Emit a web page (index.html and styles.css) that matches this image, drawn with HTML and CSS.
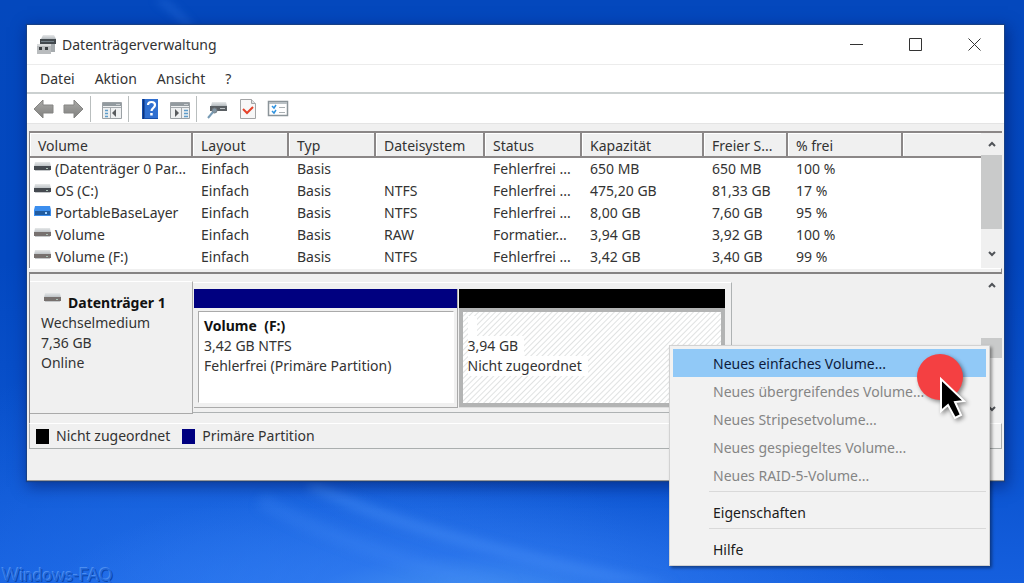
FILE: index.html
```html
<!DOCTYPE html>
<html lang="de">
<head>
<meta charset="utf-8">
<title>Datenträgerverwaltung</title>
<link rel="stylesheet" href="styles.css">
</head>
<body>
<svg class="defs" aria-hidden="true">
  <defs>
    <linearGradient id="top" x1="0" y1="0" x2="0" y2="1"><stop offset="0" stop-color="#e6e8e9"/><stop offset="1" stop-color="#b4babe"/></linearGradient>
    <linearGradient id="arrow" x1="0" y1="0" x2="0" y2="1"><stop offset="0" stop-color="#a9a9a7"/><stop offset="1" stop-color="#80807e"/></linearGradient>
    <symbol id="drive" viewBox="0 0 17 11"><path d="M1 0h15l1 5H0z" fill="url(#top)"/><path d="M0 4h17v4H0z" fill="currentColor"/><path d="M1 8h15v1H1z" fill="#c5c8ca"/><path d="M12 6h2v1h-2z" fill="#a9c0b4"/></symbol>
    <symbol id="drive-blue" viewBox="0 0 17 11"><path d="M1 0h15l1 4v6H0V4z" fill="#3c8eee"/><path d="M1 5h15v4H1z" fill="#225c9f"/><path d="M11 6h2v2h-2z" fill="#a4d3ff"/></symbol>
    <symbol id="back" viewBox="0 0 22 20"><path d="M1 10 10 1v5h10v8H10v5z" fill="url(#arrow)" stroke="#858583"/></symbol>
  </defs>
</svg>
<main class="desktop">
  <svg class="wallpaper" viewBox="0 0 1024 583" preserveAspectRatio="none" aria-hidden="true">
    <g fill="none" stroke="#4a92f8">
      <path d="M150-6q25 14 42 36" stroke-width="5" opacity=".35"/>
      <path d="M310 484q120 64 470 124" stroke-width="12" opacity=".4"/>
      <path d="M260 500q120 70 400 120" stroke-width="16" opacity=".2"/>
    </g>
  </svg>
  <section class="window">
    <header class="titlebar">
      <svg class="app-icon" viewBox="0 0 21 20"><path d="M7 0h11l2 4H5z" fill="url(#top)"/><path d="M4 4h16v5H4z" fill="#42484d"/><path d="M5 6h13v1H5z" fill="#738088"/><path d="M15 9h4v8h-4z" fill="#a6abae"/><path d="M1 10h14v9H1z" fill="#b9bcbe"/><path d="M1 9h14v2H1z" fill="#d8dadb"/><path d="M3 12h3v3H3zm6 0h3v3H9z" fill="#3b3f42"/></svg>
      <h1>Datenträgerverwaltung</h1>
      <div class="controls">
        <button aria-label="Minimieren"><svg viewBox="0 0 13 13"><path d="M0 6.5h13"/></svg></button>
        <button aria-label="Maximieren"><svg viewBox="0 0 13 13"><path d="M.5.5h12v12H.5z"/></svg></button>
        <button aria-label="Schließen"><svg viewBox="0 0 13 13"><path d="m.5.5 12 12m0-12-12 12"/></svg></button>
      </div>
    </header>
    <nav class="menubar"><button>Datei</button><button>Aktion</button><button>Ansicht</button><button>?</button></nav>
    <div class="toolbar">
      <div class="group">
        <button aria-label="Zurück"><svg viewBox="0 0 22 20"><use href="#back"/></svg></button>
        <button aria-label="Vorwärts"><svg viewBox="0 0 22 20"><use href="#back" transform="matrix(-1 0 0 1 22 0)"/></svg></button>
      </div>
      <div class="group wide">
        <button aria-label="Konsolenstruktur"><svg viewBox="0 0 22 20"><path d="M1.500 3.500h19v16h-19z" fill="#eef0f1" stroke="#9ba1a5"/><path d="M2 4h18v3H2z" fill="#929a9f"/><path d="M2 8.500h18M9.500 9v10" stroke="#a4a9ad"/><path d="M4 11.500h3m-3 3h3m-3 3h3" stroke="#5e9cca" stroke-width="1.500"/><path d="m15 10v8l-4-4z" fill="#585b5e"/><path d="M15.500 5.500h1m1 0h1" stroke="#fff"/></svg></button>
      </div>
      <div class="group wide">
        <button aria-label="Hilfe"><svg viewBox="0 0 22 20"><path d="M3 0h16v20H3z" fill="#164eab"/><path d="M6 0h13v19H6z" fill="#2f6fd0"/><path d="M4.500 0v20" stroke="#0d347d"/><path d="M9 6c0-4 7-4 7 0 0 3-3.500 3-3.500 6" fill="none" stroke="#fff" stroke-width="2.200"/><path d="M11.200 14h2.500v2.500h-2.500z" fill="#fff"/></svg></button>
        <button aria-label="Aktionsbereich"><svg viewBox="0 0 22 20"><path d="M1.500 3.500h19v16h-19z" fill="#eef0f1" stroke="#9ba1a5"/><path d="M2 4h18v3H2z" fill="#929a9f"/><path d="M2 8.500h18M12.500 9v10" stroke="#a4a9ad"/><path d="M15 11.500h4m-4 3h4m-4 3h4" stroke="#5e9cca" stroke-width="1.500"/><path d="m6 10v8l4-4z" fill="#585b5e"/><path d="M15.500 5.500h1m1 0h1" stroke="#fff"/></svg></button>
      </div>
      <div class="group wide">
        <button aria-label="Datenträger prüfen"><svg viewBox="0 0 22 20"><path d="M5 3h14l1 4H4z" fill="url(#top)"/><path d="M3 7h17v5H3z" fill="#5a5f63"/><path d="M13 9h5v1h-5z" fill="#bec3c6"/><circle cx="7.500" cy="11.500" r="2.500" fill="#8196a4" stroke="#747c82"/><path d="m6 13-5 6" stroke="#779bb5" stroke-width="2"/></svg></button>
        <button aria-label="Eigenschaften"><svg viewBox="0 0 22 20"><path d="M3.500.5h11l4 4v15h-15z" fill="#f7f7f7" stroke="#a3a5a6"/><path d="M14.500.5v4h4" fill="#dfe1e2" stroke="#a3a5a6"/><path d="m6 10 4 4 6-6" fill="none" stroke="#e54128" stroke-width="2"/></svg></button>
        <button aria-label="Einstellungen"><svg viewBox="0 0 22 20"><path d="M1.500 2.500h19v14h-19z" fill="#fff" stroke="#8b9499" stroke-width="1.500"/><path d="M2 3h18v2H2z" fill="#b9c0c4"/><path d="m5 7 2 2 2-3m-4 6 2 2 2-3" fill="none" stroke="#2e92de" stroke-width="1.500"/><path d="M12 8.500h6m-6 5h6" stroke="#aab0b3"/></svg></button>
      </div>
    </div>
    <div class="list-pane">
      <table>
        <colgroup><col class="c-name"><col class="c-layout"><col class="c-type"><col class="c-fs"><col class="c-status"><col class="c-cap"><col class="c-free"><col class="c-pct"><col></colgroup>
        <thead><tr><th>Volume</th><th>Layout</th><th>Typ</th><th>Dateisystem</th><th>Status</th><th>Kapazität</th><th>Freier S...</th><th>% frei</th><th></th></tr></thead>
        <tbody>
          <tr><td><svg class="drive"><use href="#drive"/></svg>(Datenträger 0 Par...</td><td>Einfach</td><td>Basis</td><td></td><td>Fehlerfrei ...</td><td>650 MB</td><td>650 MB</td><td>100 %</td><td></td></tr>
          <tr><td><svg class="drive"><use href="#drive"/></svg>OS (C:)</td><td>Einfach</td><td>Basis</td><td>NTFS</td><td>Fehlerfrei ...</td><td>475,20 GB</td><td>81,33 GB</td><td>17 %</td><td></td></tr>
          <tr><td><svg class="drive"><use href="#drive-blue"/></svg>PortableBaseLayer</td><td>Einfach</td><td>Basis</td><td>NTFS</td><td>Fehlerfrei ...</td><td>8,00 GB</td><td>7,60 GB</td><td>95 %</td><td></td></tr>
          <tr><td><svg class="drive light"><use href="#drive"/></svg>Volume</td><td>Einfach</td><td>Basis</td><td>RAW</td><td>Formatier...</td><td>3,94 GB</td><td>3,92 GB</td><td>100 %</td><td></td></tr>
          <tr><td><svg class="drive light"><use href="#drive"/></svg>Volume (F:)</td><td>Einfach</td><td>Basis</td><td>NTFS</td><td>Fehlerfrei ...</td><td>3,42 GB</td><td>3,40 GB</td><td>99 %</td><td></td></tr>
        </tbody>
      </table>
      <div class="scrollbar">
        <button aria-label="Nach oben"><svg viewBox="0 0 8 6"><path d="m1 5 3-3 3 3"/></svg></button>
        <div class="thumb"></div>
        <button class="down" aria-label="Nach unten"><svg viewBox="0 0 8 6"><path d="m1 1 3 3 3-3"/></svg></button>
      </div>
    </div>
    <div class="splitter"></div>
    <div class="disk-pane">
      <div class="disk">
        <div class="disk-label">
          <h2><svg class="drive light"><use href="#drive"/></svg>Datenträger 1</h2>
          <p>Wechselmedium</p><p>7,36 GB</p><p>Online</p>
        </div>
        <div class="volumes">
          <div class="volume primary"><div class="bar"></div><div class="body"><b>Volume&nbsp; (F:)</b><p>3,42 GB NTFS</p><p>Fehlerfrei (Primäre Partition)</p></div></div>
          <div class="volume free"><div class="bar"></div><div class="body"><p><span>&nbsp;</span></p><p><span>3,94 GB</span></p><p><span>Nicht zugeordnet</span></p></div></div>
        </div>
      </div>
      <div class="scrollbar">
        <button aria-label="Nach oben"><svg viewBox="0 0 8 6"><path d="m1 5 3-3 3 3"/></svg></button>
        <div class="thumb low"></div>
        <button class="down" aria-label="Nach unten"><svg viewBox="0 0 8 6"><path d="m1 1 3 3 3-3"/></svg></button>
      </div>
    </div>
    <div class="legend"><i class="black"></i><span>Nicht zugeordnet</span><i class="navy"></i><span>Primäre Partition</span></div>
    <footer class="statusbar"></footer>
  </section>
  <div class="context-menu" role="menu">
    <button class="active" role="menuitem">Neues einfaches Volume...</button>
    <button disabled role="menuitem">Neues übergreifendes Volume...</button>
    <button disabled role="menuitem">Neues Stripesetvolume...</button>
    <button disabled role="menuitem">Neues gespiegeltes Volume...</button>
    <button disabled role="menuitem">Neues RAID-5-Volume...</button>
    <hr>
    <button role="menuitem">Eigenschaften</button>
    <hr>
    <button role="menuitem">Hilfe</button>
  </div>
  <svg class="pointer" viewBox="0 0 60 76" aria-hidden="true"><circle cx="26" cy="25" r="23" fill="#f44042"/><path d="M27 27v32l7-6 7 13 6-3-6-13 9-1z" fill="#000" stroke="#fff" stroke-width="2"/></svg>
  <div class="watermark">Windows-FAQ</div>
</main>
</body>
</html>
```
FILE: styles.css
```css
* { box-sizing: border-box; }
body { margin: 0; font: 14px/20px "Noto Sans", "Open Sans", sans-serif; color: #333; }
h1, h2, p { margin: 0; font-size: inherit; font-weight: 400; }
button { padding: 0; border: 0; background: none; font: inherit; color: inherit; }
svg { display: block; }
.defs { position: absolute; width: 0; height: 0; }

.desktop {
  position: relative;
  min-height: 100vh;
  padding: 25px 20px 0 27px;
  overflow: hidden;
  background:
    radial-gradient(ellipse 430px 130px at 46% 104%, #4a96f2 0%, rgba(56, 130, 244, .55) 40%, transparent 100%),
    radial-gradient(ellipse 420px 260px at 22% 104%, rgba(44, 122, 242, .6) 0%, transparent 100%),
    linear-gradient(180deg, #0448bd 0%, #0348c0 45%, #0b54d0 80%, #155fde 100%);
}
.wallpaper { position: absolute; inset: 0; width: 100%; height: 100%; filter: blur(5px); }

.window { position: relative; background: #f0f0f0; box-shadow: 0 0 1px 1px #174087, 2px 4px 14px 2px rgba(0, 20, 90, .5); }

.titlebar { display: flex; align-items: center; height: 40px; padding-left: 9px; background: #fff; border-bottom: 1px solid #ececec; }
.app-icon { width: 21px; height: 20px; margin-right: 5px; }
.controls { display: flex; margin-left: auto; }
.controls button { display: grid; place-items: center; width: 59px; height: 38px; }
.controls svg { width: 13px; height: 13px; fill: none; stroke: #333; }

.menubar { display: flex; gap: 20px; height: 29px; padding: 1px 13px 0; background: #fff; border-bottom: 2px solid #cbd0d0; }

.toolbar { display: flex; align-items: center; height: 30px; padding-left: 6px; background: #fff; border-bottom: 1px solid #e4e4e4; }
.group { display: flex; gap: 7px; padding-right: 6px; }
.group.wide { gap: 8px; padding: 3px 5px 3px 10px; border-left: 1px solid #b9bebe; }
.toolbar svg { width: 22px; height: 20px; }

.list-pane { display: flex; margin: 7px 2px 0; background: #fff; border-top: 2px solid #8b8787; border-left: 1px solid #8b8787; }
table { flex: 1; width: 0; table-layout: fixed; border-collapse: separate; border-spacing: 0; }
th, td { padding: 0 0 0 8px; text-align: left; font-weight: 400; white-space: nowrap; }
th { height: 25px; padding-top: 3px; background: #f0f0f0; border-right: 2px solid #8b8787; border-bottom: 2px solid #8b8787; box-shadow: inset 1px 1px #fff; }
th:last-child { border-right: 0; }
td { height: 22px; }
td:first-child { padding-left: 4px; }
.drive { display: inline-block; width: 17px; height: 11px; margin-right: 4px; vertical-align: 1px; color: #454a50; }
.light { color: #77716f; }
.c-name { width: 163px; } .c-layout { width: 96px; } .c-type { width: 87px; } .c-fs { width: 109px; }
.c-status { width: 97px; } .c-cap { width: 122px; } .c-free { width: 84px; } .c-pct { width: 115px; }

.scrollbar { display: flex; flex-direction: column; width: 21px; background: #f0f0f0; }
.scrollbar button { display: grid; place-items: center; height: 22px; }
.scrollbar button.down { height: 28px; }
.scrollbar svg { width: 8px; height: 6px; fill: none; stroke: #505358; stroke-width: 2; }
.thumb { height: 74px; background: #c9caca; }
.thumb.low { height: 20px; margin-top: 42px; }
.down { margin-top: auto; }

.splitter { height: 6px; margin: 0 2px; border-top: 1px solid #fff; border-right: 1px solid #8b8b8b; border-bottom: 2px solid #858383; }

.disk-pane { display: flex; justify-content: space-between; margin: 0 2px; border-left: 1px solid #8b8787; }
.disk { display: flex; flex: 1; padding: 7px 0 9px; }
.disk-label { width: 163px; height: 133px; padding: 11px; border: 1px solid #aaa; border-top-color: #fff; border-left: 0; }
.disk-label h2, .volume b { font-weight: 700; color: #111; }
.disk-label h2 { display: flex; padding-left: 3px; }
.disk-label .drive { margin-right: 7px; }
.volumes { display: flex; gap: 1px; width: 539px; height: 131px; margin-top: 1px; padding: 6px 6px 4px 1px; border: 1px solid #aeb2b3; border-top-color: #fff; border-left: 0; }
.volume { display: flex; flex: 132; flex-direction: column; }
.bar { height: 19px; }
.body { flex: 1; padding: 4px 5px; white-space: nowrap; background: #fff; }
.primary { border-right: 1px solid #aaa; border-bottom: 1px solid #aaa; }
.primary .bar { background: #000080; }
.primary .body { margin: 3px 3px 4px 4px; border: 1px solid #aaa; border-color: #aaa #fff #fff #aaa; }
.free { flex: 134; border-bottom: 1px solid #ddd; }
.free .bar { background: #000; }
.free .body { border: 4px solid #b3b4b4; background: repeating-linear-gradient(135deg, #fff 0 2px, #e0e2e2 3px, #fff 4px); }
.free span { display: inline-block; padding-right: 6px; background: #fff; }

.legend { display: flex; align-items: center; height: 26px; margin: 0 2px; padding: 0 6px; border: 1px solid #aaaeae; border-top-color: #fff; }
.legend i { width: 13px; height: 15px; margin-right: 7px; }
.legend span { margin-right: 12px; }
.black { background: #000; }
.navy { background: #000080; }
.statusbar { height: 32px; border-bottom: 1px solid #999; }

.context-menu { position: absolute; top: 345px; left: 669px; width: 321px; padding: 3px 3px 2px; background: #f2f2f2; border: 1px solid #d2d2d2; box-shadow: 2px 2px 3px rgba(0, 0, 0, .4); color: #1b1b1b; }
.context-menu button { display: block; width: 100%; height: 28px; padding: 1px 0 0 40px; text-align: left; }
.context-menu .active { background: #91c9f7; color: #0e1b3c; }
.context-menu button:disabled { color: #858585; }
.context-menu hr { height: 1px; margin: 2px 0 6px 36px; border: 0; background: #d9d9d9; }

.pointer { position: absolute; top: 352px; left: 914px; width: 60px; height: 76px; filter: drop-shadow(2px 2px 2px rgba(0, 0, 0, .45)); }
.watermark { position: absolute; bottom: 0; left: 2px; font: 17px/17px Lato, sans-serif; color: #2269dc; text-shadow: -1px -1px #4b8df0, 1px 1px #0b47ad; }
```
